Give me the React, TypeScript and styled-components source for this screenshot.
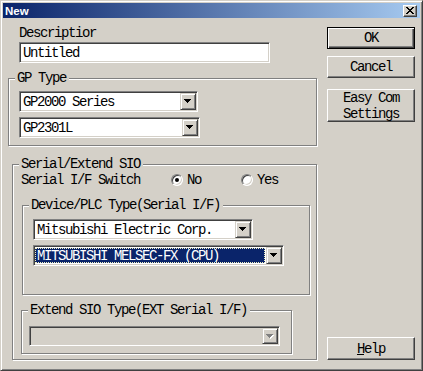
import styled, { createGlobalStyle, css } from "styled-components";

const GlobalStyle = createGlobalStyle`
  html, body {
    margin: 0;
    padding: 0;
    background: #d4d0c8;
  }
`;

const Window = styled.div`
  box-sizing: border-box;
  width: 423px;
  height: 371px;
  display: flex;
  flex-direction: column;
  padding: 2px;
  background: #d4d0c8;
  border: 1px solid;
  border-color: #d4d0c8 #404040 #404040 #d4d0c8;
  box-shadow: inset 1px 1px 0 #fff, inset -1px -1px 0 #808080;
  font-family: "Liberation Mono", "Courier New", monospace;
  font-size: 14px;
  letter-spacing: -1.4px;
  color: #000;
`;

const TitleBar = styled.div`
  height: 16px;
  display: flex;
  align-items: center;
  justify-content: space-between;
  padding: 0 3px 0 2px;
  background: linear-gradient(to right, #0a246a, #a6caf0);
`;

const Title = styled.span`
  font-family: "Liberation Sans", Arial, sans-serif;
  font-weight: bold;
  font-size: 11.5px;
  letter-spacing: 0;
  color: #fff;
`;

const CloseButton = styled.div`
  box-sizing: border-box;
  width: 14px;
  height: 12px;
  display: flex;
  align-items: center;
  justify-content: center;
  background: #d4d0c8;
  border: 1px solid;
  border-color: #fff #404040 #404040 #fff;
  box-shadow: inset -1px -1px 0 #808080;
`;

const Body = styled.div`
  flex: 1;
  display: flex;
  gap: 10px;
  padding: 0 5px 8px;
`;

const LeftCol = styled.div`
  width: 309px;
  display: flex;
  flex-direction: column;
  padding-top: 7px;
`;

const RightCol = styled.div`
  width: 88px;
  display: flex;
  flex-direction: column;
  padding-top: 9px;
`;

const FieldLabel = styled.div`
  line-height: 16px;
  height: 16px;
  padding-left: 11px;
`;

const TextBox = styled.div`
  box-sizing: border-box;
  margin: 1px 0 0 11px;
  width: 251px;
  height: 21px;
  display: flex;
  align-items: center;
  padding: 0 3px;
  background: #fff;
  border: 1px solid;
  border-color: #808080 #fff #fff #808080;
  box-shadow: inset 1px 1px 0 #404040, inset -1px -1px 0 #d4d0c8;
`;

const GroupBox = styled.fieldset<{ $ml: number; $mt: number; $width: number }>`
  box-sizing: border-box;
  min-width: 0;
  margin: ${(p) => p.$mt}px 0 0 ${(p) => p.$ml}px;
  width: ${(p) => p.$width}px;
  padding: 0;
  border: 1px solid #808080;
  box-shadow: 1px 1px 0 #fff, inset 1px 1px 0 #fff;
`;

const Legend = styled.legend`
  margin-left: 6px;
  padding: 0 3px 0 2px;
  line-height: 16px;
  background: #d4d0c8;
`;

const GroupBody = styled.div<{ $pad: string; $gap?: number }>`
  display: flex;
  flex-direction: column;
  align-items: flex-start;
  gap: ${(p) => p.$gap ?? 5}px;
  padding: ${(p) => p.$pad};
`;

const DropDown = styled.div<{ $width: number; $height?: number; $disabled?: boolean }>`
  box-sizing: border-box;
  width: ${(p) => p.$width}px;
  height: ${(p) => p.$height ?? 21}px;
  display: flex;
  padding: 1px;
  background: ${(p) => (p.$disabled ? "#d4d0c8" : "#fff")};
  border: 1px solid;
  border-color: #808080 #fff #fff #808080;
  box-shadow: inset 1px 1px 0 #404040, inset -1px -1px 0 #d4d0c8;
`;

const DropValue = styled.div<{ $selected?: boolean }>`
  flex: 1;
  display: flex;
  align-items: center;
  padding-left: 2px;
  white-space: nowrap;
  overflow: hidden;
  ${(p) =>
    p.$selected &&
    css`
      margin: 1px 1px 1px 0;
      padding-left: 1px;
      background: #0a246a;
      color: #fff;
      border: 1px dotted #f0f0c0;
    `}
`;

const ArrowButton = styled.div`
  box-sizing: border-box;
  width: 16px;
  height: 100%;
  display: flex;
  align-items: center;
  justify-content: center;
  background: #d4d0c8;
  border: 1px solid;
  border-color: #d4d0c8 #404040 #404040 #d4d0c8;
  box-shadow: inset 1px 1px 0 #fff, inset -1px -1px 0 #808080;
`;

const SwitchRow = styled.div`
  display: flex;
  align-items: center;
  height: 16px;
  line-height: 16px;
`;

const SwitchLabel = styled.span`
  width: 150px;
`;

const RadioGroup = styled.div`
  display: flex;
  gap: 40px;
`;

const RadioOption = styled.label`
  display: flex;
  align-items: center;
  gap: 4px;
`;

const RadioCircle = styled.span<{ $checked: boolean }>`
  box-sizing: border-box;
  width: 12px;
  height: 12px;
  border-radius: 50%;
  display: flex;
  align-items: center;
  justify-content: center;
  background: #fff;
  border: 1px solid;
  border-color: #808080 #fff #fff #808080;
  box-shadow: inset 1px 1px 0 #404040, inset -1px -1px 0 #d4d0c8;
  &::after {
    content: "";
    width: 4px;
    height: 4px;
    border-radius: 50%;
    background: ${(p) => (p.$checked ? "#000" : "transparent")};
  }
`;

const Button = styled.div<{ $default?: boolean; $height: number; $mt?: string }>`
  box-sizing: border-box;
  width: 88px;
  height: ${(p) => p.$height}px;
  margin-top: ${(p) => p.$mt ?? "0"};
  display: flex;
  flex-direction: column;
  align-items: center;
  justify-content: center;
  text-align: center;
  line-height: 16px;
  background: #d4d0c8;
  border: 1px solid;
  ${(p) =>
    p.$default
      ? css`
          border-color: #000;
          box-shadow: inset 1px 1px 0 #fff, inset -1px -1px 0 #404040,
            inset -2px -2px 0 #808080;
        `
      : css`
          border-color: #fff #404040 #404040 #fff;
          box-shadow: inset -1px -1px 0 #808080;
        `}
`;

const Arrow = ({ disabled }: { disabled?: boolean }) => (
  <svg width="8" height="5" viewBox="0 0 8 5" shapeRendering="crispEdges">
    {disabled && (
      <g fill="#fff">
        <rect x="1" y="1" width="7" height="1" />
        <rect x="2" y="2" width="5" height="1" />
        <rect x="3" y="3" width="3" height="1" />
        <rect x="4" y="4" width="1" height="1" />
      </g>
    )}
    <g fill={disabled ? "#808080" : "#000"}>
      <rect x="0" y="0" width="7" height="1" />
      <rect x="1" y="1" width="5" height="1" />
      <rect x="2" y="2" width="3" height="1" />
      <rect x="3" y="3" width="1" height="1" />
    </g>
  </svg>
);

const Select = ({
  value,
  width,
  height,
  selected,
  disabled,
}: {
  value?: string;
  width: number;
  height?: number;
  selected?: boolean;
  disabled?: boolean;
}) => (
  <DropDown $width={width} $height={height} $disabled={disabled}>
    <DropValue $selected={selected}>{value}</DropValue>
    <ArrowButton>
      <Arrow disabled={disabled} />
    </ArrowButton>
  </DropDown>
);

const App = () => {
  return (
    <>
      <GlobalStyle />
      <Window>
        <TitleBar>
          <Title>New</Title>
          <CloseButton>
            <svg width="8" height="7" viewBox="0 0 8 7" shapeRendering="crispEdges">
              <path d="M0 0h2v1H0zM6 0h2v1H6zM1 1h2v1H1zM5 1h2v1H5zM2 2h4v1H2zM3 3h2v1H3zM2 4h4v1H2zM1 5h2v1H1zM5 5h2v1H5zM0 6h2v1H0zM6 6h2v1H6z" />
            </svg>
          </CloseButton>
        </TitleBar>
        <Body>
          <LeftCol>
            <FieldLabel>Descriptior</FieldLabel>
            <TextBox>Untitled</TextBox>

            <GroupBox $ml={0} $mt={7} $width={309}>
              <Legend>GP Type</Legend>
              <GroupBody $pad="5px 0 7px 10px">
                <Select value="GP2000 Series" width={179} />
                <Select value="GP2301L" width={181} />
              </GroupBody>
            </GroupBox>

            <GroupBox $ml={4} $mt={10} $width={305}>
              <Legend>Serial/Extend SIO</Legend>
              <GroupBody $pad="0 0 5px 8px" $gap={0}>
                <SwitchRow>
                  <SwitchLabel>Serial I/F Switch</SwitchLabel>
                  <RadioGroup>
                    <RadioOption>
                      <RadioCircle $checked />
                      No
                    </RadioOption>
                    <RadioOption>
                      <RadioCircle $checked={false} />
                      Yes
                    </RadioOption>
                  </RadioGroup>
                </SwitchRow>

                <GroupBox $ml={1} $mt={9} $width={288}>
                  <Legend>Device/PLC Type(Serial I/F)</Legend>
                  <GroupBody $pad="6px 0 28px 10px">
                    <Select value="Mitsubishi Electric Corp." width={220} />
                    <Select value="MITSUBISHI MELSEC-FX (CPU)" width={251} selected />
                  </GroupBody>
                </GroupBox>

                <GroupBox $ml={0} $mt={7} $width={271}>
                  <Legend>Extend SIO Type(EXT Serial I/F)</Legend>
                  <GroupBody $pad="8px 0 7px 7px">
                    <Select width={251} height={20} disabled />
                  </GroupBody>
                </GroupBox>
              </GroupBody>
            </GroupBox>
          </LeftCol>

          <RightCol>
            <Button $default $height={22}>OK</Button>
            <Button $height={22} $mt="7px">Cancel</Button>
            <Button $height={33} $mt="11px">
              <span>Easy Com</span>
              <span>Settings</span>
            </Button>
            <Button $height={23} $mt="auto">
              <span>
                <u>H</u>elp
              </span>
            </Button>
          </RightCol>
        </Body>
      </Window>
    </>
  );
};

export default App;
